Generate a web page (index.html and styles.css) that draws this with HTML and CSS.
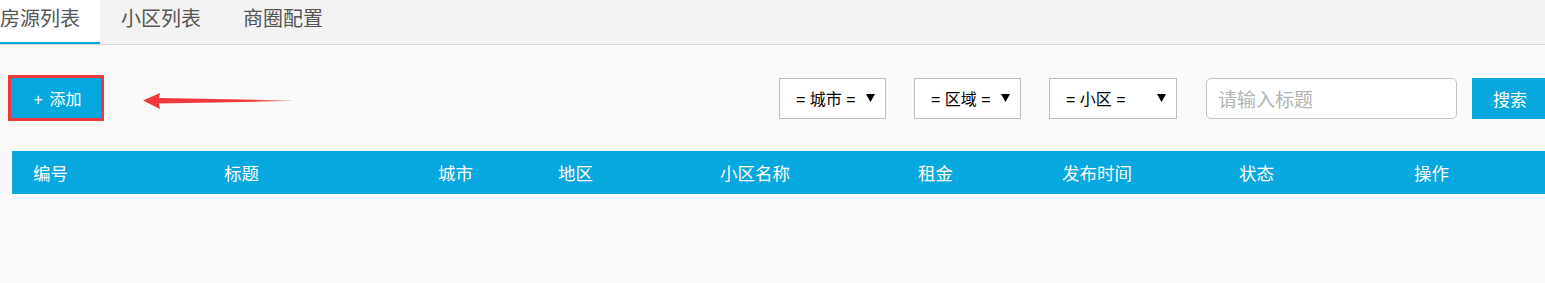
FILE: index.html
```html
<!DOCTYPE html>
<html lang="zh-CN">
<head>
<meta charset="utf-8">
<title>房源列表</title>
<link rel="stylesheet" href="styles.css">
</head>
<body>
<div class="page">
  <nav class="tabbar">
    <ul class="tabs">
      <li class="tab active">房源列表</li>
      <li class="tab">小区列表</li>
      <li class="tab">商圈配置</li>
    </ul>
  </nav>

  <div class="toolbar">
    <div class="left-group">
      <div class="highlight">
        <button class="btn btn-add">+ 添加</button>
      </div>
      <svg class="arrow" width="148" height="18" viewBox="0 0 148 18" aria-hidden="true">
        <defs>
          <linearGradient id="fade" x1="0" y1="0" x2="1" y2="0">
            <stop offset="0" stop-color="#f2383c"/>
            <stop offset="0.75" stop-color="#f2383c"/>
            <stop offset="1" stop-color="#f2383c" stop-opacity="0.25"/>
          </linearGradient>
        </defs>
        <polygon points="0,8.5 17,1 16,6 148,8.3 148,9 16,11.5 17,17" fill="url(#fade)"/>
      </svg>
    </div>
    <div class="right-group">
      <div class="select s-city"><span class="opt">= 城市 =</span><svg class="caret" width="9" height="8" viewBox="0 0 9 8"><polygon points="0,0 9,0 4.5,8" fill="#000"/></svg></div>
      <div class="select s-area"><span class="opt">= 区域 =</span><svg class="caret" width="9" height="8" viewBox="0 0 9 8"><polygon points="0,0 9,0 4.5,8" fill="#000"/></svg></div>
      <div class="select s-comm"><span class="opt">= 小区 =</span><svg class="caret" width="9" height="8" viewBox="0 0 9 8"><polygon points="0,0 9,0 4.5,8" fill="#000"/></svg></div>
      <input class="search-input" type="text" placeholder="请输入标题">
      <button class="btn btn-search">搜索</button>
    </div>
  </div>

  <div class="table-head">
    <div class="th">编号</div>
    <div class="th">标题</div>
    <div class="th">城市</div>
    <div class="th">地区</div>
    <div class="th">小区名称</div>
    <div class="th">租金</div>
    <div class="th">发布时间</div>
    <div class="th">状态</div>
    <div class="th">操作</div>
  </div>
</div>
</body>
</html>
```

FILE: styles.css
```css
html, body {
  margin: 0;
  padding: 0;
  background: #fafafa;
  overflow: hidden;
}

body {
  font-family: "Noto Sans CJK SC", "Noto Sans", "Liberation Sans", sans-serif;
  width: 1545px;
  height: 283px;
}

.page {
  width: 1560px;
}

.tabbar {
  background: #f3f3f3;
  border-bottom: 1px solid #d6d6d6;
  height: 44px;
}

.tabs {
  list-style: none;
  margin: 0 0 0 -21px;
  padding: 0;
  display: flex;
  height: 44px;
}

.tab {
  padding: 0 21px;
  height: 44px;
  line-height: 36px;
  font-size: 20px;
  color: #555;
  box-sizing: border-box;
}

.tab.active {
  background: #fff;
  box-shadow: inset 0 -2px 0 #07a7e0;
  padding-right: 20px;
}

.toolbar {
  display: flex;
  align-items: center;
  margin-top: 30px;
  padding: 0 12px 0 8px;
}

.left-group {
  display: flex;
  align-items: center;
}

.highlight {
  border: 3px solid #f0373c;
  display: flex;
}

.btn {
  border: none;
  background: #07a7e0;
  color: #fff;
  font-family: inherit;
  cursor: pointer;
  padding: 0;
}

.btn-add {
  width: 90px;
  height: 40px;
  font-family: "Liberation Sans", "Noto Sans CJK SC", sans-serif;
  font-size: 16px;
  word-spacing: 2px;
  padding-left: 3px;
}

.arrow {
  margin-left: 39px;
  margin-top: 6px;
  display: block;
}

.right-group {
  margin-left: auto;
  display: flex;
  align-items: center;
}

.select {
  box-sizing: border-box;
  height: 41px;
  background: #fff;
  border: 1px solid #bdbdbd;
  display: flex;
  align-items: center;
  justify-content: space-between;
  padding: 0 10px 0 16px;
  font-family: "Liberation Sans", "Noto Sans CJK SC", sans-serif;
  font-size: 16px;
  color: #000;
  margin-right: 28px;
}

.opt {
  white-space: nowrap;
}

.s-city, .s-area { width: 107px; }
.s-comm { width: 128px; margin-right: 29px; }

.caret { display: block; flex: none; }

.search-input {
  box-sizing: border-box;
  width: 251px;
  height: 41px;
  border: 1px solid #c2c2c2;
  border-radius: 5px;
  background: #fff;
  padding: 0 11px;
  font-family: inherit;
  font-size: 19px;
  outline: none;
}

.search-input::placeholder {
  color: #b3b3b3;
}

.btn-search {
  margin-left: 15px;
  width: 76px;
  height: 41px;
  font-size: 17px;
}

.table-head {
  margin: 30px 12px 0 12px;
  height: 43px;
  background: #07a7e0;
  display: grid;
  grid-template-columns: 191px 214px 120px 162px 198px 144px 177px 175px 1fr;
  align-items: center;
  padding-left: 21px;
}

.th {
  color: #fff;
  font-size: 17.5px;
}
```
